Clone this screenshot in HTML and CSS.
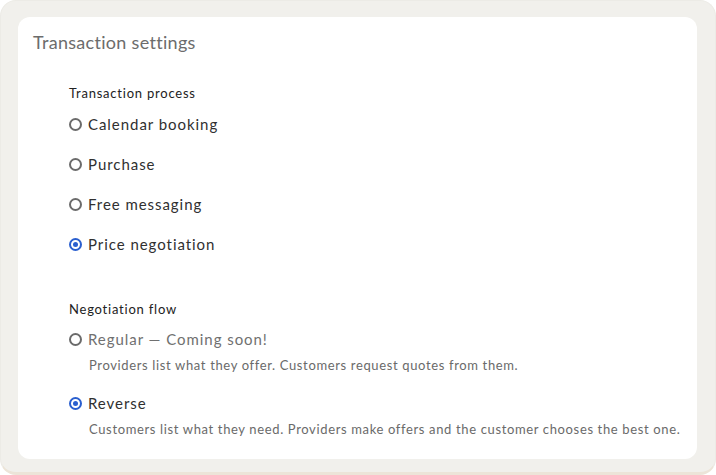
FILE: index.html
```html
<!DOCTYPE html>
<html>
<head>
<meta charset="utf-8">
<link rel="stylesheet" href="styles.css">
</head>
<body>
<div class="frame">
  <div class="card">
    <h1 class="title">Transaction settings</h1>
    <div class="section">
      <div class="label">Transaction process</div>
      <div class="options">
        <div class="opt"><span class="radio"></span><span class="opt-text">Calendar booking</span></div>
        <div class="opt"><span class="radio"></span><span class="opt-text">Purchase</span></div>
        <div class="opt"><span class="radio"></span><span class="opt-text">Free messaging</span></div>
        <div class="opt"><span class="radio checked"></span><span class="opt-text">Price negotiation</span></div>
      </div>
    </div>
    <div class="section second">
      <div class="label">Negotiation flow</div>
      <div class="options flow">
        <div class="flow-item">
          <div class="opt"><span class="radio"></span><span class="opt-text muted">Regular — Coming soon!</span></div>
          <div class="desc">Providers list what they offer. Customers request quotes from them.</div>
        </div>
        <div class="flow-item">
          <div class="opt"><span class="radio checked"></span><span class="opt-text">Reverse</span></div>
          <div class="desc">Customers list what they need. Providers make offers and the customer chooses the best one.</div>
        </div>
      </div>
    </div>
  </div>
</div>
</body>
</html>
```

FILE: styles.css
```css
* { box-sizing: border-box; }
html, body { margin: 0; padding: 0; background: #ffffff; }
body { font-family: Lato, "Noto Sans", sans-serif; width: 716px; height: 475px; overflow: hidden; }
.frame {
  width: 716px; height: 475px;
  background: #f1f0ec;
  border-radius: 16px;
  border: 1px solid #ecebe6;
  border-bottom: 3px solid #ece4d8;
  padding: 16px 18px 0 17px;
}
.card {
  background: #ffffff;
  border-radius: 12px;
  height: 442px;
  padding: 13px 16px 0 15px;
}
.title {
  margin: 0;
  font-size: 18px;
  font-weight: 400;
  color: #6c6c6c;
  line-height: 24px;
  letter-spacing: 0.3px;
}
.section { padding-left: 36px; margin-top: 30px; }
.section.second { margin-top: 46px; }
.label { font-size: 13px; color: #222; line-height: 18px; letter-spacing: 0.78px; }
.options { display: flex; flex-direction: column; gap: 20px; margin-top: 12px; }
.opt { display: flex; align-items: center; height: 20px; }
.radio {
  width: 13px; height: 13px; border-radius: 50%;
  border: 2px solid #6b6b6b;
  margin-right: 6px; flex: none;
  display: flex; align-items: center; justify-content: center;
}
.radio.checked { border-color: #2a5fcf; }
.radio.checked::after { content: ""; width: 5px; height: 5px; border-radius: 50%; background: #2a5fcf; }
.opt-text { font-size: 15px; color: #303030; letter-spacing: 0.95px; }
.opt-text.muted { color: #707070; }
.flow { gap: 19px; margin-top: 11px; }
.desc { font-size: 13px; color: #6a6a6a; padding-left: 20px; margin-top: 7px; line-height: 18px; letter-spacing: 0.64px; }
```
